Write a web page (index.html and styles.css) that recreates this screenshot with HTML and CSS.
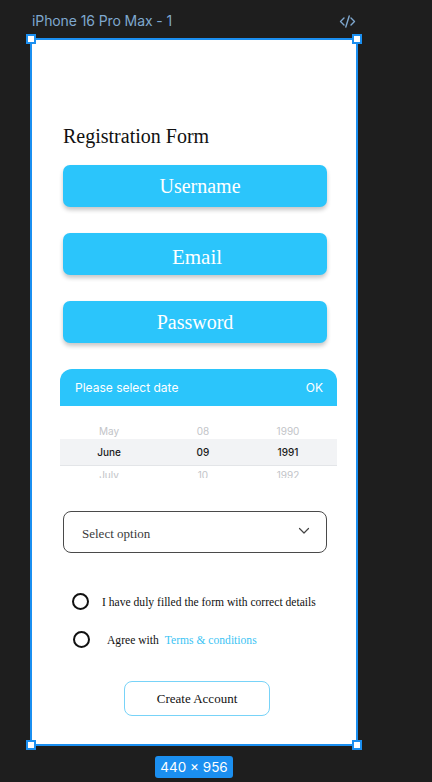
FILE: index.html
```html
<!DOCTYPE html>
<html lang="en">
<head>
<meta charset="utf-8">
<title>iPhone 16 Pro Max - 1</title>
<link rel="stylesheet" href="styles.css">
</head>
<body>
<div class="topbar">
  <span class="frame-name">iPhone 16 Pro Max - 1</span>
  <svg class="code-icon" width="17" height="13" viewBox="0 0 17 13" fill="none" stroke="#7fa8cf" stroke-width="1.4" stroke-linecap="round" stroke-linejoin="round">
    <path d="M5 3 L1.5 6.5 L5 10"/>
    <path d="M10.2 1 L6.8 12"/>
    <path d="M12 3 L15.5 6.5 L12 10"/>
  </svg>
</div>

<div class="frame">
  <span class="handle handle-tl"></span>
  <span class="handle handle-tr"></span>
  <span class="handle handle-bl"></span>
  <span class="handle handle-br"></span>

  <div class="content">
    <h1 class="title">Registration Form</h1>
    <div class="field field-user">Username</div>
    <div class="field field-email">Email</div>
    <div class="field field-pass">Password</div>

    <div class="picker">
      <div class="picker-head">
        <span>Please select date</span>
        <span>OK</span>
      </div>
      <div class="picker-body">
        <div class="prow prow-prev">
          <span>May</span><span>08</span><span>1990</span>
        </div>
        <div class="prow prow-sel">
          <span>June</span><span>09</span><span>1991</span>
        </div>
        <div class="prow prow-next">
          <span>July</span><span>10</span><span>1992</span>
        </div>
      </div>
    </div>

    <div class="select">
      <span class="select-text">Select option</span>
      <svg class="chevron" width="12" height="8" viewBox="0 0 12 8" fill="none" stroke="#444" stroke-width="1.2" stroke-linecap="round" stroke-linejoin="round">
        <path d="M1.5 1.5 L6 6 L10.5 1.5"/>
      </svg>
    </div>

    <div class="check check-one">
      <span class="circle"></span>
      <span class="check-text">I have duly filled the form with correct details</span>
    </div>
    <div class="check check-two">
      <span class="circle"></span>
      <span class="check-text">Agree with <span class="link">Terms &amp; conditions</span></span>
    </div>

    <div class="create">Create Account</div>
  </div>
</div>

<div class="badge-row">
  <span class="badge">440 × 956</span>
</div>
</body>
</html>
```

FILE: styles.css
```css
html, body {
  margin: 0;
  padding: 0;
}

body {
  width: 432px;
  height: 782px;
  overflow: hidden;
  background: #1e1e1e;
  font-family: "Liberation Serif", "Times New Roman", serif;
}

.topbar {
  height: 38px;
  box-sizing: border-box;
  padding: 12px 76px 0 32px;
  display: flex;
  justify-content: space-between;
  align-items: flex-start;
}

.frame-name {
  font-family: Inter, "Noto Sans", sans-serif;
  font-size: 14px;
  line-height: 17px;
  color: #7fa8cf;
  letter-spacing: -0.1px;
}

.code-icon {
  display: block;
  margin-top: 3px;
}

.frame {
  position: relative;
  margin-left: 30px;
  width: 328px;
  height: 708px;
  box-sizing: border-box;
  border: 2px solid #1b8ff0;
  background: #ffffff;
}

.handle {
  position: absolute;
  width: 10px;
  height: 10px;
  box-sizing: border-box;
  background: #ffffff;
  border: 2px solid #1b8ff0;
}

.handle-tl { left: -6px; top: -6px; }
.handle-tr { right: -6px; top: -6px; }
.handle-bl { left: -6px; bottom: -6px; }
.handle-br { right: -6px; bottom: -6px; }

.content {
  padding: 84px 0 0 31px;
  display: flex;
  flex-direction: column;
  align-items: flex-start;
}

.title {
  margin: 0;
  font-weight: normal;
  font-size: 20px;
  line-height: 24px;
  color: #111;
}

.field {
  width: 264px;
  height: 42px;
  box-sizing: border-box;
  border-radius: 7px;
  background: #2bc5fb;
  box-shadow: 0 3px 4px rgba(0, 0, 0, 0.22);
  color: #ffffff;
  font-size: 20px;
  line-height: 23px;
  display: flex;
  align-items: center;
  justify-content: center;
  margin-top: 26px;
}

.field-user {
  margin-top: 17px;
  padding-left: 10px;
}

.field-email {
  font-size: 21px;
  padding-top: 6px;
  padding-left: 4px;
}

.picker {
  margin-top: 26px;
  margin-left: -3px;
  width: 277px;
  font-family: Inter, "Noto Sans", sans-serif;
}

.picker-head {
  height: 37px;
  box-sizing: border-box;
  padding: 0 14px 0 15px;
  border-radius: 12px 12px 0 0;
  background: #2bc5fb;
  color: #ffffff;
  font-size: 12px;
  display: flex;
  justify-content: space-between;
  align-items: center;
}

.picker-body {
  padding-top: 12px;
}

.prow {
  display: grid;
  grid-template-columns: 98px 90px 80px;
  font-size: 10px;
  text-align: center;
}

.prow-prev {
  height: 21px;
  line-height: 26px;
  color: #c2c4c8;
}

.prow-sel {
  height: 27px;
  box-sizing: border-box;
  line-height: 27px;
  background: #f2f3f5;
  border-bottom: 1px solid #e3e5e8;
  color: #1a1a1a;
  font-weight: 500;
}

.prow-next {
  height: 12px;
  overflow: hidden;
  line-height: 18px;
  color: #c2c4c8;
}

.select {
  margin-top: 33px;
  width: 264px;
  height: 42px;
  box-sizing: border-box;
  border: 1px solid #4a4a4a;
  border-radius: 8px;
  padding: 4px 16px 0 18px;
  display: flex;
  align-items: center;
  justify-content: space-between;
}

.select-text {
  font-size: 13px;
  color: #3a3a3a;
}

.chevron {
  display: block;
  margin-top: -7px;
}

.check {
  display: flex;
  align-items: center;
  height: 20px;
  font-size: 11.6px;
  color: #111;
}

.check-one {
  margin-top: 38px;
  padding-left: 9px;
  gap: 13px;
}

.check-two {
  margin-top: 18px;
  padding-left: 10px;
  gap: 17px;
}

.circle {
  width: 17px;
  height: 17px;
  box-sizing: border-box;
  border: 2px solid #111;
  border-radius: 50%;
  flex: none;
}

.check-text {
  padding-top: 2px;
}

.link {
  color: #3cc4f4;
  margin-left: 3px;
}

.create {
  margin-top: 32px;
  margin-left: 61px;
  width: 146px;
  height: 35px;
  box-sizing: border-box;
  border: 1px solid #78d3f8;
  border-radius: 8px;
  display: flex;
  align-items: center;
  justify-content: center;
  font-size: 13px;
  color: #111;
}

.badge-row {
  margin-left: 30px;
  width: 328px;
  margin-top: 10px;
  display: flex;
  justify-content: center;
}

.badge {
  height: 22px;
  padding: 0 5px;
  border-radius: 3px;
  background: #1b8ff0;
  color: #ffffff;
  font-family: Inter, "Noto Sans", sans-serif;
  font-size: 13.5px;
  line-height: 22px;
}
```
